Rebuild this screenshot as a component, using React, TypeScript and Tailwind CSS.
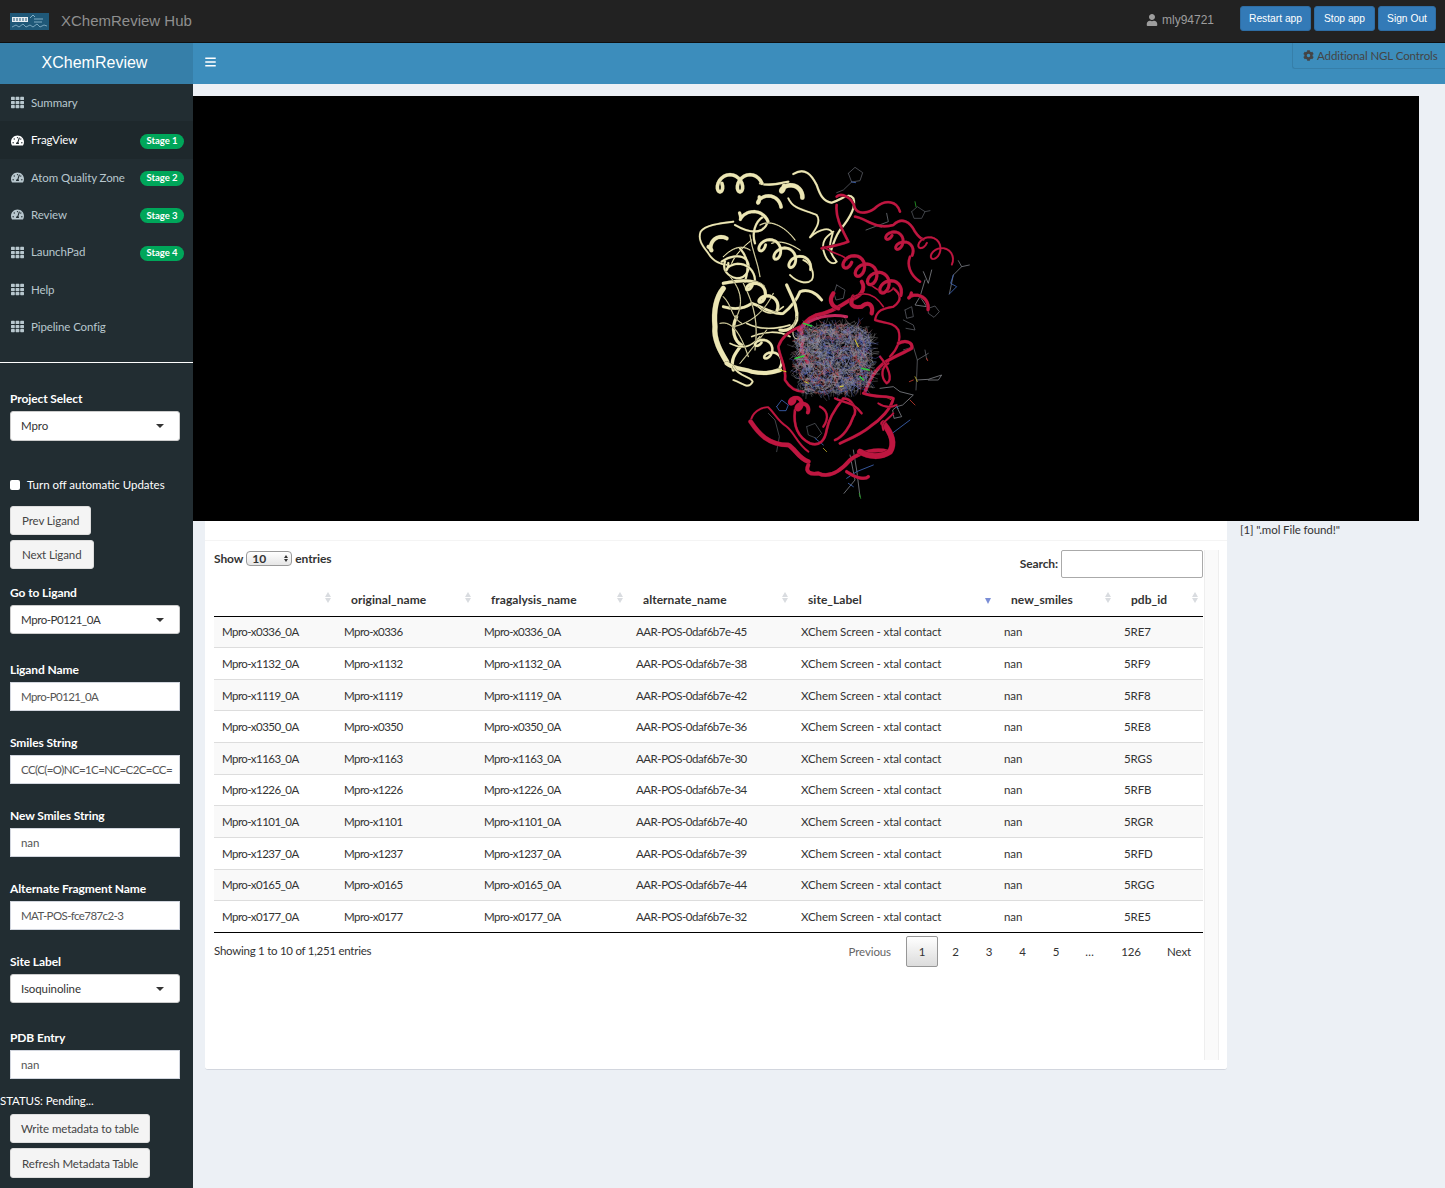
import { FaTh, FaTachometerAlt, FaBars, FaUser, FaCog } from "react-icons/fa";

const FONT = "font-['Lato','Noto_Sans',sans-serif]";

const NAV = [
  { label: "Summary", icon: "grid" },
  { label: "FragView", icon: "gauge", stage: "Stage 1", active: true },
  { label: "Atom Quality Zone", icon: "gauge", stage: "Stage 2" },
  { label: "Review", icon: "gauge", stage: "Stage 3" },
  { label: "LaunchPad", icon: "grid", stage: "Stage 4" },
  { label: "Help", icon: "grid" },
  { label: "Pipeline Config", icon: "grid" },
];

const COLS = ["", "original_name", "fragalysis_name", "alternate_name", "site_Label", "new_smiles", "pdb_id"];

const ROWS = [
  ["x0336", "45", "5RE7"],
  ["x1132", "38", "5RF9"],
  ["x1119", "42", "5RF8"],
  ["x0350", "36", "5RE8"],
  ["x1163", "30", "5RGS"],
  ["x1226", "34", "5RFB"],
  ["x1101", "40", "5RGR"],
  ["x1237", "39", "5RFD"],
  ["x0165", "44", "5RGG"],
  ["x0177", "32", "5RE5"],
];

// ribbons traced by eye from the viewer, in a 930x1080 box
const CREAM = [
  { d: "M240 100C270 110 300 100 325 95", w: 6 },
  { d: "M325 145C340 180 380 180 410 195C425 215 405 240 390 262C420 235 450 230 458 250C450 280 440 300 470 335C460 345 440 340 430 300C425 270 440 260 460 245", w: 5 },
  { d: "M340 72C375 50 395 75 410 105C420 135 430 155 455 158C485 150 505 125 520 145C530 170 505 210 480 240C465 262 458 285 452 305", w: 6 },
  { d: "M160 215C120 220 75 225 62 245C52 270 70 290 85 310C100 335 125 345 145 345", w: 5 },
  { d: "M165 225C200 245 225 250 245 240C265 225 270 205 250 200C225 215 215 250 225 280", w: 6 },
  { d: "M240 225C275 205 320 235 345 270M275 280C300 270 330 280 360 300M215 270C190 290 165 315 155 340M210 300C180 280 150 300 130 320", w: 3 },
  { d: "M125 335C145 320 180 310 200 330C215 355 200 385 170 385C145 380 125 360 135 335M180 295C210 330 205 360 195 395", w: 6 },
  { d: "M330 375C350 395 380 405 395 390C405 375 395 340 370 330", w: 5 },
  { d: "M130 415C110 440 100 480 105 530C100 570 125 610 140 635", w: 15 },
  { d: "M130 400C175 390 225 385 250 410", w: 9 },
  { d: "M130 470C165 480 195 475 215 460C245 470 280 495 310 490C335 470 350 450 360 425C385 415 410 430 425 450", w: 8 },
  { d: "M320 405C335 440 355 470 350 510C340 535 320 545 300 540", w: 9 },
  { d: "M170 500C150 540 165 575 185 585C165 610 150 630 160 660", w: 9 },
  { d: "M235 470C265 500 285 490 310 470M200 520C240 540 280 540 330 525M215 560C250 545 295 540 330 560M150 580C190 600 215 590 240 560", w: 4 },
  { d: "M140 640C165 660 190 655 215 665C250 672 270 670 300 660", w: 12 },
  { d: "M160 650C175 680 215 680 218 695C205 720 190 700 160 690", w: 5 },
  { d: "M130 440C160 470 150 500 185 520M150 380C185 420 190 460 170 500M260 540C220 590 205 610 180 640M210 255C215 300 235 340 240 380M350 500C325 560 345 580 370 560M190 400C225 470 235 520 225 600M280 430C250 490 210 520 160 530M120 520C160 510 185 560 205 620", w: 2.5 },
];

const RED = [
  { d: "M470 140C480 130 515 135 525 175C535 195 570 190 590 170C615 150 650 150 660 185", w: 7 },
  { d: "M525 200C560 205 585 240 640 225C665 200 690 215 705 245C715 260 720 265 730 268", w: 7 },
  { d: "M470 165C465 205 490 245 505 275C480 285 450 290 425 295M690 320C680 345 690 375 720 395", w: 7 },
  { d: "M545 395C560 420 540 440 510 450C480 470 445 490 410 495C385 505 355 530 365 550", w: 11 },
  { d: "M460 430C445 450 455 470 475 475M520 440C505 465 520 475 545 470C570 450 580 470 575 490", w: 12 },
  { d: "M640 415C660 430 670 450 640 470C610 475 590 480 585 510C610 520 640 515 655 540C665 570 650 600 630 620", w: 6 },
  { d: "M655 580C675 570 700 575 695 595C670 610 640 620 610 640C580 665 570 690 555 725", w: 9 },
  { d: "M360 530C335 540 305 560 295 590C300 625 320 650 315 690C330 715 350 725 370 725", w: 7 },
  { d: "M370 570C355 600 375 620 385 640", w: 9 },
  { d: "M600 620C625 650 640 690 620 700C600 680 605 650 625 640", w: 6 },
  { d: "M550 730C590 745 620 735 640 745C635 775 600 810 570 830C540 855 500 870 480 880", w: 8 },
  { d: "M345 780C340 820 350 860 390 880C420 890 435 870 440 840C445 810 470 770 490 745C515 745 535 780 520 800C510 830 490 860 465 870", w: 7 },
  { d: "M212 815C215 790 240 770 265 772C285 790 290 810 320 830C345 850 350 880 385 905", w: 5 },
  { d: "M212 815C235 850 265 885 325 885C345 895 355 925 385 935", w: 13 },
  { d: "M385 945C375 965 390 975 415 970C445 985 480 965 510 930C540 905 590 895 625 905", w: 11 },
  { d: "M610 820C635 850 645 880 630 905C600 925 565 920 540 905", w: 17 },
  { d: "M500 965C530 985 555 990 565 980", w: 9 },
  { d: "M420 770C440 780 450 800 430 830M465 745C495 760 520 755 545 790", w: 6 },
  { d: "M595 760C610 770 630 775 650 765M640 790C625 810 600 815 610 840", w: 5 },
  { d: "M560 395C590 420 620 440 640 415M520 440C560 420 590 440 610 470M430 290C470 320 490 310 500 330", w: 4 },
];

// helices as a spring along an axis: x1, y1, x2, y2, radius, turns, stroke
const CREAM_COILS = [
  [105, 100, 225, 100, 26, 2, 10],
  [300, 100, 355, 135, 18, 1, 13],
  [225, 135, 290, 165, 18, 1, 10],
  [165, 185, 250, 210, 18, 1, 9],
  [75, 295, 130, 270, 14, 1, 11],
  [240, 275, 375, 350, 24, 3, 8],
  [130, 330, 210, 380, 22, 1, 6],
  [205, 395, 280, 470, 20, 2, 9],
  [235, 565, 290, 640, 20, 2, 7],
];
const RED_COILS = [
  [498, 325, 645, 425, 26, 4, 9],
  [625, 245, 685, 305, 20, 2, 8],
  [725, 265, 800, 330, 26, 2, 5],
  [685, 420, 735, 470, 16, 1, 9],
  [335, 745, 375, 780, 14, 2, 11],
];

function springPath(c: number[]) {
  const [x1, y1, x2, y2, r, turns] = c;
  const len = Math.hypot(x2 - x1, y2 - y1);
  const ax = (x2 - x1) / len;
  const ay = (y2 - y1) / len;
  const steps = turns * 20;
  let d = "";
  for (let i = 0; i <= steps; i++) {
    const t = i / steps;
    const a = t * turns * Math.PI * 2;
    // a big enough cos term makes the curve loop back on itself, like a coil
    const along = t * len + Math.cos(a) * r * 0.8;
    const across = Math.sin(a) * r;
    const x = x1 + ax * along - ay * across;
    const y = y1 + ay * along + ax * across;
    d += `${i === 0 ? "M" : "L"}${x.toFixed(1)} ${y.toFixed(1)}`;
  }
  return d;
}

const STICKS = [
  { c: "#55585f", d: "M505 70L525 52L548 68L540 92L515 96L505 70M515 96L490 120L470 128" },
  { c: "#3f66b8", d: "M515 96L527 98" },
  { c: "#4c4f55", d: "M695 185L712 170L735 185L725 205L702 205L695 185M735 185L750 182" },
  { c: "#28a028", d: "M705 155L708 170" },
  { c: "#6a6d73", d: "M558 240L590 228L625 215L620 190M590 228L605 232" },
  { c: "#75787f", d: "M835 332L845 350L868 345M845 350L820 375L808 432" },
  { c: "#3f66b8", d: "M820 375L812 400L830 410L808 432" },
  { c: "#7d7f85", d: "M730 365L745 400L755 360M735 390L720 440L740 470L705 465L720 440" },
  { c: "#55585f", d: "M745 475L765 468L778 485L762 502L745 490L745 475M470 405L495 420L490 445L468 450L462 430L470 405" },
  { c: "#55585f", d: "M675 480L695 470L700 500L680 505L675 480M670 510L700 525L705 540L678 535" },
  { c: "#5b5e64", d: "M670 600L700 590L712 630L710 680L708 720M712 630L745 610M735 600L740 628" },
  { c: "#7d7f85", d: "M710 690L745 688L785 675L775 690L745 690" },
  { c: "#c0392b", d: "M688 695L700 690M740 625L743 632M690 750L705 765" },
  { c: "#b7a72a", d: "M705 680L712 695M615 740L632 748" },
  { c: "#7d7f85", d: "M600 715L640 710L660 725L700 735L668 765L650 770L665 800L642 805L638 780L650 770" },
  { c: "#3f66b8", d: "M645 765L655 775M290 770L305 750L325 765L318 782L298 782L290 770" },
  { c: "#4c4f55", d: "M265 790L285 810L298 860L290 905M380 830L405 820L425 850L410 865L385 855L380 830" },
  { c: "#3f66b8", d: "M405 865L430 885M630 855L690 810" },
  { c: "#b7a72a", d: "M430 895L440 905" },
  { c: "#7d7f85", d: "M520 900L530 960L540 1040M510 915L525 990L492 1030" },
  { c: "#3f66b8", d: "M500 985L530 965L580 945M505 1000L520 1010" },
  { c: "#28a028", d: "M538 1030L542 1045" },
];

// the ligand pile in the middle of the pocket: short seeded segments
function buildCluster() {
  const out: { d: string; c: string }[] = [];
  const palette = ["#8e8e92", "#8e8e92", "#9a9a9c", "#a5a3a6", "#6f78b4", "#5265c0", "#d0383c", "#8e8e92", "#b1878c", "#4a5fc4"];
  let seed = 1337;
  const rnd = () => {
    seed = (seed * 1103515245 + 12345) & 0x7fffffff;
    return seed / 0x7fffffff;
  };
  let n = 0;
  while (n < 2000) {
    const px = rnd() * 2 - 1;
    const py = rnd() * 2 - 1;
    // squarish blob, not a disc
    if (px * px * px * px + py * py * py * py > 0.7) continue;
    n++;
    const x = 462 + px * 125 + py * 8;
    const y = 625 + py * 112 - px * 8;
    const b = rnd() * Math.PI * 2;
    const len = 6 + rnd() * 10;
    const b2 = b + 1 - rnd() * 2;
    const x2 = x + Math.cos(b) * len;
    const y2 = y + Math.sin(b) * len;
    const d = `M${x.toFixed(1)} ${y.toFixed(1)}L${x2.toFixed(1)} ${y2.toFixed(1)}L${(x2 + Math.cos(b2) * len).toFixed(1)} ${(y2 + Math.sin(b2) * len).toFixed(1)}`;
    out.push({ d, c: palette[Math.floor(rnd() * palette.length)] });
  }
  return out;
}
const CLUSTER = buildCluster();

function Protein() {
  return (
    <svg viewBox="0 0 930 1080" className="w-[310px] h-[360px] blur-[0.4px]" fill="none" strokeLinecap="round" strokeLinejoin="round">
      {STICKS.map((s, i) => (
        <path key={i} d={s.d} stroke={s.c} strokeWidth={2.5} />
      ))}
      {CREAM.map((p, i) => (
        <g key={i}>
          <path d={p.d} stroke="#5f5c42" strokeWidth={p.w + 1.5} />
          <path d={p.d} stroke="#ece6b4" strokeWidth={p.w} />
        </g>
      ))}
      {CREAM_COILS.map((c, i) => (
        <g key={i}>
          <path d={springPath(c)} stroke="#5f5c42" strokeWidth={c[6] + 1.5} />
          <path d={springPath(c)} stroke="#ece6b4" strokeWidth={c[6]} />
        </g>
      ))}
      {RED.map((p, i) => (
        <g key={i}>
          <path d={p.d} stroke="#5e0c20" strokeWidth={p.w + 1.5} />
          <path d={p.d} stroke="#bf1640" strokeWidth={p.w} />
        </g>
      ))}
      {RED_COILS.map((c, i) => (
        <g key={i}>
          <path d={springPath(c)} stroke="#5e0c20" strokeWidth={c[6] + 1.5} />
          <path d={springPath(c)} stroke="#bf1640" strokeWidth={c[6]} />
        </g>
      ))}
      <path d="M355 540C395 500 450 490 500 500" stroke="#c2265a" strokeWidth={9} />
      {CLUSTER.map((s, i) => (
        <path key={i} d={s.d} stroke={s.c} strokeWidth={1.4} opacity={0.8} />
      ))}
      <path d="M345 625L372 618M545 655L568 660M540 680L550 690M370 520L395 528" stroke="#27d43a" strokeWidth={4} />
      <path d="M375 695L385 700M525 570L535 590M300 660L318 665M480 710L490 708" stroke="#d8cf2c" strokeWidth={3} />
    </svg>
  );
}

function Logo() {
  return (
    <svg viewBox="0 0 39 17" className="w-[39px] h-[17px] shrink-0">
      <rect width="39" height="17" fill="#1f5878" />
      <rect x="2" y="4" width="16" height="5" fill="#e8eef2" />
      <path d="M4 5v3M7 5v3M10 5v3M13 5v3M16 5v3" stroke="#1f5878" strokeWidth="1" />
      <path d="M20 5l3-3 2 2M24 6h9M24 9h8" stroke="#9cc4d8" strokeWidth="0.8" fill="none" />
      <path d="M2 14l4-2 3 2 4-3 3 3 4-2 3 2 4-3 3 3 4-2 3 1" stroke="#8fb9cf" strokeWidth="0.8" fill="none" />
    </svg>
  );
}

function Caret() {
  return <span className="ml-auto w-0 h-0 border-x-[4px] border-x-transparent border-t-[4px] border-t-[#333]" />;
}

function Label({ children }: { children: string }) {
  return <div className="h-5 leading-5 mb-0.5 text-[12px] tracking-[-0.1px] font-bold text-white">{children}</div>;
}

function SelectBox({ value, className = "h-[30px]" }: { value: string; className?: string }) {
  return (
    <div className={`flex items-center w-[170px] px-[10px] pr-[15px] bg-white rounded-[3px] border border-[#ccc] text-[#333] ${className}`}>
      {value}
      <Caret />
    </div>
  );
}

function TextBox({ value, tight }: { value: string; tight?: boolean }) {
  return (
    <div className={`flex items-center w-[170px] h-[29px] pl-[10px] pt-px bg-white border border-[#d2d6de] text-[#555] whitespace-nowrap overflow-hidden ${tight ? "tracking-[-0.6px]" : ""}`}>
      {value}
    </div>
  );
}

function SideButton({ children, className = "px-[10px]" }: { children: string; className?: string }) {
  return (
    <div className={`w-fit h-[29px] flex items-center pt-px bg-[#f4f4f4] border border-[#ddd] rounded-[3px] text-[#444] ${className}`}>
      {children}
    </div>
  );
}

function SortArrows({ active }: { active?: boolean }) {
  if (active) {
    return <span className="absolute right-[5px] top-[14px] w-0 h-0 border-x-[3.5px] border-x-transparent border-t-[6px] border-t-[#7b8ed6]" />;
  }
  return (
    <span className="absolute right-[5px] top-[8px] flex flex-col gap-[1px]">
      <span className="w-0 h-0 border-x-[3.5px] border-x-transparent border-b-[5px] border-b-[#d9dce0]" />
      <span className="w-0 h-0 border-x-[3.5px] border-x-transparent border-t-[5px] border-t-[#d9dce0]" />
    </span>
  );
}

export default function App() {
  return (
    <div className={`w-full h-[1188px] overflow-hidden flex flex-col bg-[#ecf0f5] text-[11.5px] tracking-[-0.1px] ${FONT}`}>
      {/* top bar */}
      <header className="h-[43px] shrink-0 flex items-center bg-[#222] border-b border-[#0f0f0f] tracking-normal font-['Liberation_Sans',sans-serif]">
        <div className="ml-[10px]">
          <Logo />
        </div>
        <span className="ml-3 text-[15px] text-[#8f8f8f]">XChemReview Hub</span>
        <div className="ml-auto mb-[2px] flex items-center text-[12px] text-[#9d9d9d]">
          <FaUser className="w-3 h-3 mr-1" />
          mly94721
        </div>
        <div className="ml-[26px] mr-[9px] flex gap-[3px] mb-[5px] text-[10.25px] text-white">
          <span className="h-[25px] w-[71px] flex items-center justify-center rounded-[3px] bg-[#337ab7] border border-[#2e6da4]">Restart app</span>
          <span className="h-[25px] w-[61px] flex items-center justify-center rounded-[3px] bg-[#337ab7] border border-[#2e6da4]">Stop app</span>
          <span className="h-[25px] w-[58px] flex items-center justify-center rounded-[3px] bg-[#337ab7] border border-[#2e6da4]">Sign Out</span>
        </div>
      </header>

      <div className="flex flex-1 min-h-0">
        {/* sidebar */}
        <aside className="w-[193px] shrink-0 bg-[#222d32]">
          <div className="h-[41px] pr-1 pb-[2px] flex items-center justify-center bg-[#367fa9] text-white text-[16px] tracking-normal font-['Liberation_Sans',sans-serif]">
            XChemReview
          </div>
          <nav className="h-[262px]">
            {NAV.map((item) => (
              <div
                key={item.label}
                className={`h-[37.35px] flex items-center pl-[11px] pr-[9px] ${item.active ? "bg-[#1e282c] text-white" : "text-[#b8c7ce]"}`}
              >
                {item.icon === "grid" ? <FaTh className="w-[13px] h-[13px] mr-[7px]" /> : <FaTachometerAlt className="w-[13px] h-[13px] mr-[7px]" />}
                {item.label}
                {item.stage && (
                  <span className="ml-auto mt-[2px] h-[15px] w-[44px] flex items-center justify-center rounded-full bg-[#00a65a] text-white text-[9.5px] tracking-normal font-bold">
                    {item.stage}
                  </span>
                )}
              </div>
            ))}
          </nav>
          <div className="mt-[16px] h-px bg-white" />
          <div className="pl-[10px] text-white">
            <div className="mt-[26px]">
              <Label>Project Select</Label>
              <SelectBox value="Mpro" />
            </div>
            <div className="mt-[34px] h-5 flex items-center tracking-normal">
              <span className="w-[10px] h-[10px] bg-white rounded-[2px] mr-[7px]" />
              Turn off automatic Updates
            </div>
            <SideButton className="mt-[11px] px-[11px]">Prev Ligand</SideButton>
            <SideButton className="mt-[5px] px-[11px]">Next Ligand</SideButton>
            <div className="mt-[14px]">
              <Label>Go to Ligand</Label>
              <SelectBox value="Mpro-P0121_0A" className="h-[29px] pt-px tracking-[-0.45px]" />
            </div>
            <div className="mt-[26px]">
              <Label>Ligand Name</Label>
              <TextBox value="Mpro-P0121_0A" tight />
            </div>
            <div className="mt-[22px]">
              <Label>Smiles String</Label>
              <TextBox value="CC(C(=O)NC=1C=NC=C2C=CC=" tight />
            </div>
            <div className="mt-[22px]">
              <Label>New Smiles String</Label>
              <TextBox value="nan" />
            </div>
            <div className="mt-[22px]">
              <Label>Alternate Fragment Name</Label>
              <TextBox value="MAT-POS-fce787c2-3" tight />
            </div>
            <div className="mt-[22px]">
              <Label>Site Label</Label>
              <SelectBox value="Isoquinoline" className="h-[29px] pt-px" />
            </div>
            <div className="mt-[25px]">
              <Label>PDB Entry</Label>
              <TextBox value="nan" />
            </div>
            <div className="-ml-[10px] mt-[12px] h-5 leading-5">STATUS: Pending...</div>
            <SideButton className="mt-[3px] px-[10px]">Write metadata to table</SideButton>
            <SideButton className="mt-[5px] h-[30px] px-[11px]">Refresh Metadata Table</SideButton>
          </div>
        </aside>

        {/* main column */}
        <main className="flex-1 min-w-0">
          <div className="h-[41px] flex items-start justify-between bg-[#3c8dbc]">
            <FaBars className="ml-[12px] mt-[13px] w-[11px] h-[12px] text-white" />
            <div className="h-[26px] w-[153px] flex items-center pl-[10px] gap-[3px] border-l border-b border-[#367fa9] rounded-bl-[3px] text-[#444] whitespace-nowrap">
              <FaCog className="w-[11px] h-[11px]" />
              Additional NGL Controls
            </div>
          </div>

          <div className="mt-3 w-[1226px] h-[425px] bg-black pl-[487px] pt-[54px]">
            <Protein />
          </div>

          <div className="flex">
            {/* table box */}
            <section className="ml-3 w-[1022px] h-[549px] bg-white rounded-b-[3px] border-b border-[#d2d6de] shrink-0">
              <div className="h-[20px] border-b border-[#f4f4f4]" />
              <div className="flex h-[510px] pt-[9px] box-content">
                <div className="ml-[9px] w-[989px] shrink-0 text-[#333]">
                  <div className="h-[34px] flex justify-between text-[12px]">
                    <div className="flex items-center h-[17px] font-bold gap-[3px]">
                      Show
                      <span className="h-[15px] w-[46px] flex items-center pl-[5px] rounded-[4px] border border-[#9a9a9a] bg-gradient-to-b from-white to-[#e6e6e6]">
                        10
                        <span className="ml-auto mr-[3px] flex flex-col gap-[1px]">
                          <span className="w-0 h-0 border-x-[2.5px] border-x-transparent border-b-[3px] border-b-[#333]" />
                          <span className="w-0 h-0 border-x-[2.5px] border-x-transparent border-t-[3px] border-t-[#333]" />
                        </span>
                      </span>
                      entries
                    </div>
                    <div className="flex items-center gap-[3px] h-[28px] font-bold">
                      Search:
                      <span className="w-[142px] h-[28px] bg-white border border-[#aaa] rounded-[2px]" />
                    </div>
                  </div>

                  <table className="w-full table-fixed border-collapse">
                    <colgroup>
                      <col className="w-[122px]" />
                      <col className="w-[140px]" />
                      <col className="w-[152px]" />
                      <col className="w-[165px]" />
                      <col className="w-[203px]" />
                      <col className="w-[120px]" />
                      <col className="w-[87px]" />
                    </colgroup>
                    <thead>
                      <tr className="h-[32px] border-b border-black">
                        {COLS.map((c) => (
                          <th key={c} className="relative text-left font-bold text-[12px] tracking-[0.05px] pl-[15px]">
                            {c}
                            <SortArrows active={c === "site_Label"} />
                          </th>
                        ))}
                      </tr>
                    </thead>
                    <tbody>
                      {ROWS.map((r, i) => (
                        <tr key={r[0]} className={`h-[31.67px] border-b ${i === 9 ? "border-black" : "border-[#ddd]"} ${i % 2 === 0 ? "bg-[#f9f9f9]" : "bg-white"}`}>
                          <td className="pl-2 tracking-[-0.55px]">Mpro-{r[0]}_0A</td>
                          <td className="pl-2 tracking-[-0.55px]">Mpro-{r[0]}</td>
                          <td className="pl-2 tracking-[-0.55px]">Mpro-{r[0]}_0A</td>
                          <td className="pl-2 tracking-[-0.48px]">AAR-POS-0daf6b7e-{r[1]}</td>
                          <td className="pl-2">XChem Screen - xtal contact</td>
                          <td className="pl-2">nan</td>
                          <td className="pl-2">{r[2]}</td>
                        </tr>
                      ))}
                    </tbody>
                  </table>

                  <div className="mt-[3px] flex justify-between">
                    <div className="mt-[6px] tracking-[-0.26px]">Showing 1 to 10 of 1,251 entries</div>
                    <div className="flex items-center h-[31px] mr-[13px]">
                      <span className="text-[#666] mr-[15px]">Previous</span>
                      <span className="w-[32px] h-[31px] flex items-center justify-center rounded-[2px] border border-[#979797] bg-gradient-to-b from-white to-[#dcdcdc]">1</span>
                      <span className="w-[35px] text-center">2</span>
                      <span className="w-[32px] text-center">3</span>
                      <span className="w-[35px] text-center">4</span>
                      <span className="w-[32px] text-center">5</span>
                      <span className="w-[35px] text-center">…</span>
                      <span className="w-[48px] text-center">126</span>
                      <span className="ml-[12px] w-[23px]">Next</span>
                    </div>
                  </div>
                </div>
                <div className="ml-px w-[15px] h-[510px] bg-[#fafafa] border-x border-[#eee]" />
              </div>
            </section>
            <div className="ml-[13px] text-[#333]">[1] ".mol File found!"</div>
          </div>
        </main>
      </div>
    </div>
  );
}
